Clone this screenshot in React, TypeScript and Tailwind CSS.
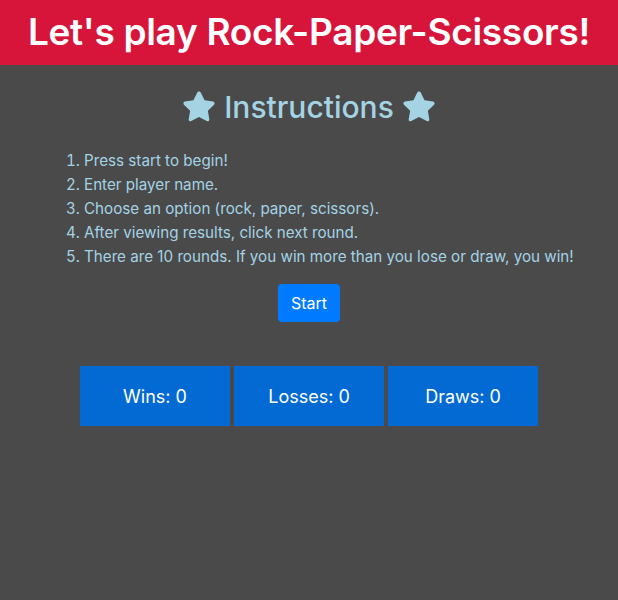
import React from "react";

function Star() {
  return (
    <svg width="38" height="38" viewBox="0 0 24 24" className="inline-block">
      <path
        d="M12 2.2c.5 0 .9.3 1.1.7l2.4 4.9 5.4.8c.9.1 1.3 1.3.6 1.9l-3.9 3.8.9 5.4c.2.9-.8 1.6-1.6 1.2L12 18.3l-4.9 2.6c-.8.4-1.8-.3-1.6-1.2l.9-5.4-3.9-3.8c-.7-.6-.3-1.8.6-1.9l5.4-.8 2.4-4.9c.2-.4.6-.7 1.1-.7z"
        fill="#a4d3e4"
      />
    </svg>
  );
}

export default function App() {
  const steps = [
    "Press start to begin!",
    "Enter player name.",
    "Choose an option (rock, paper, scissors).",
    "After viewing results, click next round.",
    "There are 10 rounds. If you win more than you lose or draw, you win!",
  ];
  return (
    <div
      className="w-[618px] h-[600px] bg-[#4a4a4a]"
      style={{ fontFamily: "Inter, 'Liberation Sans', sans-serif" }}
    >
      <header className="h-[65px] bg-[#d7153a] flex items-center justify-center">
        <h1 className="text-white font-semibold text-[37px] leading-none tracking-[-0.3px] -mt-[2px]">
          Let's play Rock-Paper-Scissors!
        </h1>
      </header>
      <div className="flex items-center justify-center gap-[6px] mt-[22px] h-[40px]">
        <Star />
        <h2 className="text-[#a4d3e4] text-[30px] font-medium leading-none">Instructions</h2>
        <Star />
      </div>
      <ol className="list-decimal list-inside pl-[66px] mt-[22px] text-[#a4d3e4] text-[15.2px] leading-[24px]">
        {steps.map((s) => (
          <li key={s}>{s}</li>
        ))}
      </ol>
      <div className="flex justify-center mt-[15px]">
        <button className="bg-[#007bff] text-white text-[16px] rounded-[4px] h-[38px] w-[62px] flex items-center justify-center">
          Start
        </button>
      </div>
      <div className="flex justify-center gap-[4px] mt-[44px]">
        {["Wins: 0", "Losses: 0", "Draws: 0"].map((t) => (
          <div
            key={t}
            className="w-[150px] h-[60px] bg-[#046ad3] text-white text-[18px] flex items-center justify-center"
          >
            {t}
          </div>
        ))}
      </div>
    </div>
  );
}
